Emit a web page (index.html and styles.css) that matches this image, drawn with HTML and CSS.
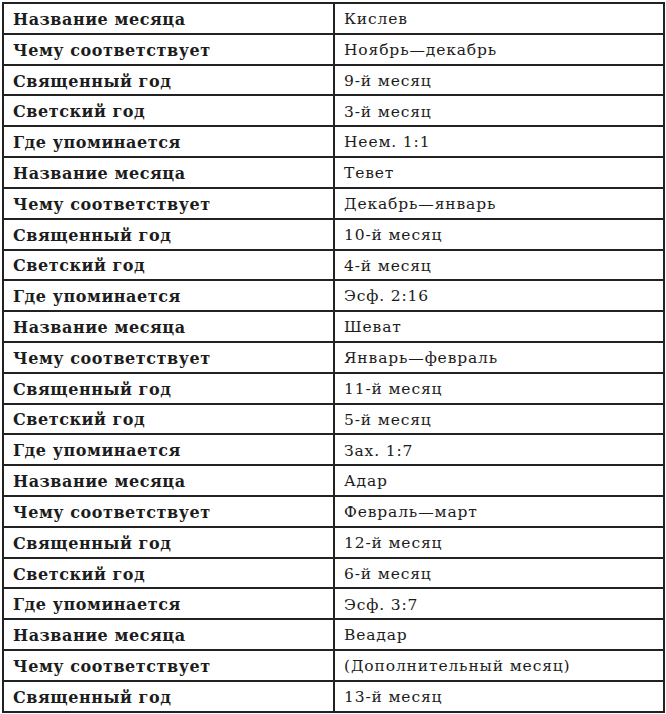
FILE: index.html
```html
<!DOCTYPE html>
<html lang="ru">
<head>
<meta charset="utf-8">
<link rel="stylesheet" href="styles.css">
</head>
<body>
<table class="months">
<tbody>
<tr><th>Название месяца</th><td>Кислев</td></tr>
<tr><th>Чему соответствует</th><td>Ноябрь—декабрь</td></tr>
<tr><th>Священный год</th><td>9-й месяц</td></tr>
<tr><th>Светский год</th><td>3-й месяц</td></tr>
<tr><th>Где упоминается</th><td>Неем. 1:1</td></tr>
<tr><th>Название месяца</th><td>Тевет</td></tr>
<tr><th>Чему соответствует</th><td>Декабрь—январь</td></tr>
<tr><th>Священный год</th><td>10-й месяц</td></tr>
<tr><th>Светский год</th><td>4-й месяц</td></tr>
<tr><th>Где упоминается</th><td>Эсф. 2:16</td></tr>
<tr><th>Название месяца</th><td>Шеват</td></tr>
<tr><th>Чему соответствует</th><td>Январь—февраль</td></tr>
<tr><th>Священный год</th><td>11-й месяц</td></tr>
<tr><th>Светский год</th><td>5-й месяц</td></tr>
<tr><th>Где упоминается</th><td>Зах. 1:7</td></tr>
<tr><th>Название месяца</th><td>Адар</td></tr>
<tr><th>Чему соответствует</th><td>Февраль—март</td></tr>
<tr><th>Священный год</th><td>12-й месяц</td></tr>
<tr><th>Светский год</th><td>6-й месяц</td></tr>
<tr><th>Где упоминается</th><td>Эсф. 3:7</td></tr>
<tr><th>Название месяца</th><td>Веадар</td></tr>
<tr><th>Чему соответствует</th><td>(Дополнительный месяц)</td></tr>
<tr><th>Священный год</th><td>13-й месяц</td></tr>
</tbody>
</table>
</body>
</html>
```
FILE: styles.css
```css
html, body {
  margin: 0;
  padding: 0;
  background: #ffffff;
}
body {
  padding: 2px 0 0 2px;
}
.months {
  border-collapse: collapse;
  width: 663px;
  height: 711px;
  font-family: "DejaVu Serif", "Liberation Serif", serif;
  color: #1c1c1c;
}
.months th,
.months td {
  border: 2px solid #222222;
  text-align: left;
  vertical-align: middle;
  padding: 3px 0 0 9px;
  line-height: 1;
}
.months th {
  width: 320px;
  font-weight: bold;
  font-size: 16px;
  letter-spacing: 0.55px;
}
.months td {
  font-size: 15.5px;
  letter-spacing: 0.85px;
}
```
